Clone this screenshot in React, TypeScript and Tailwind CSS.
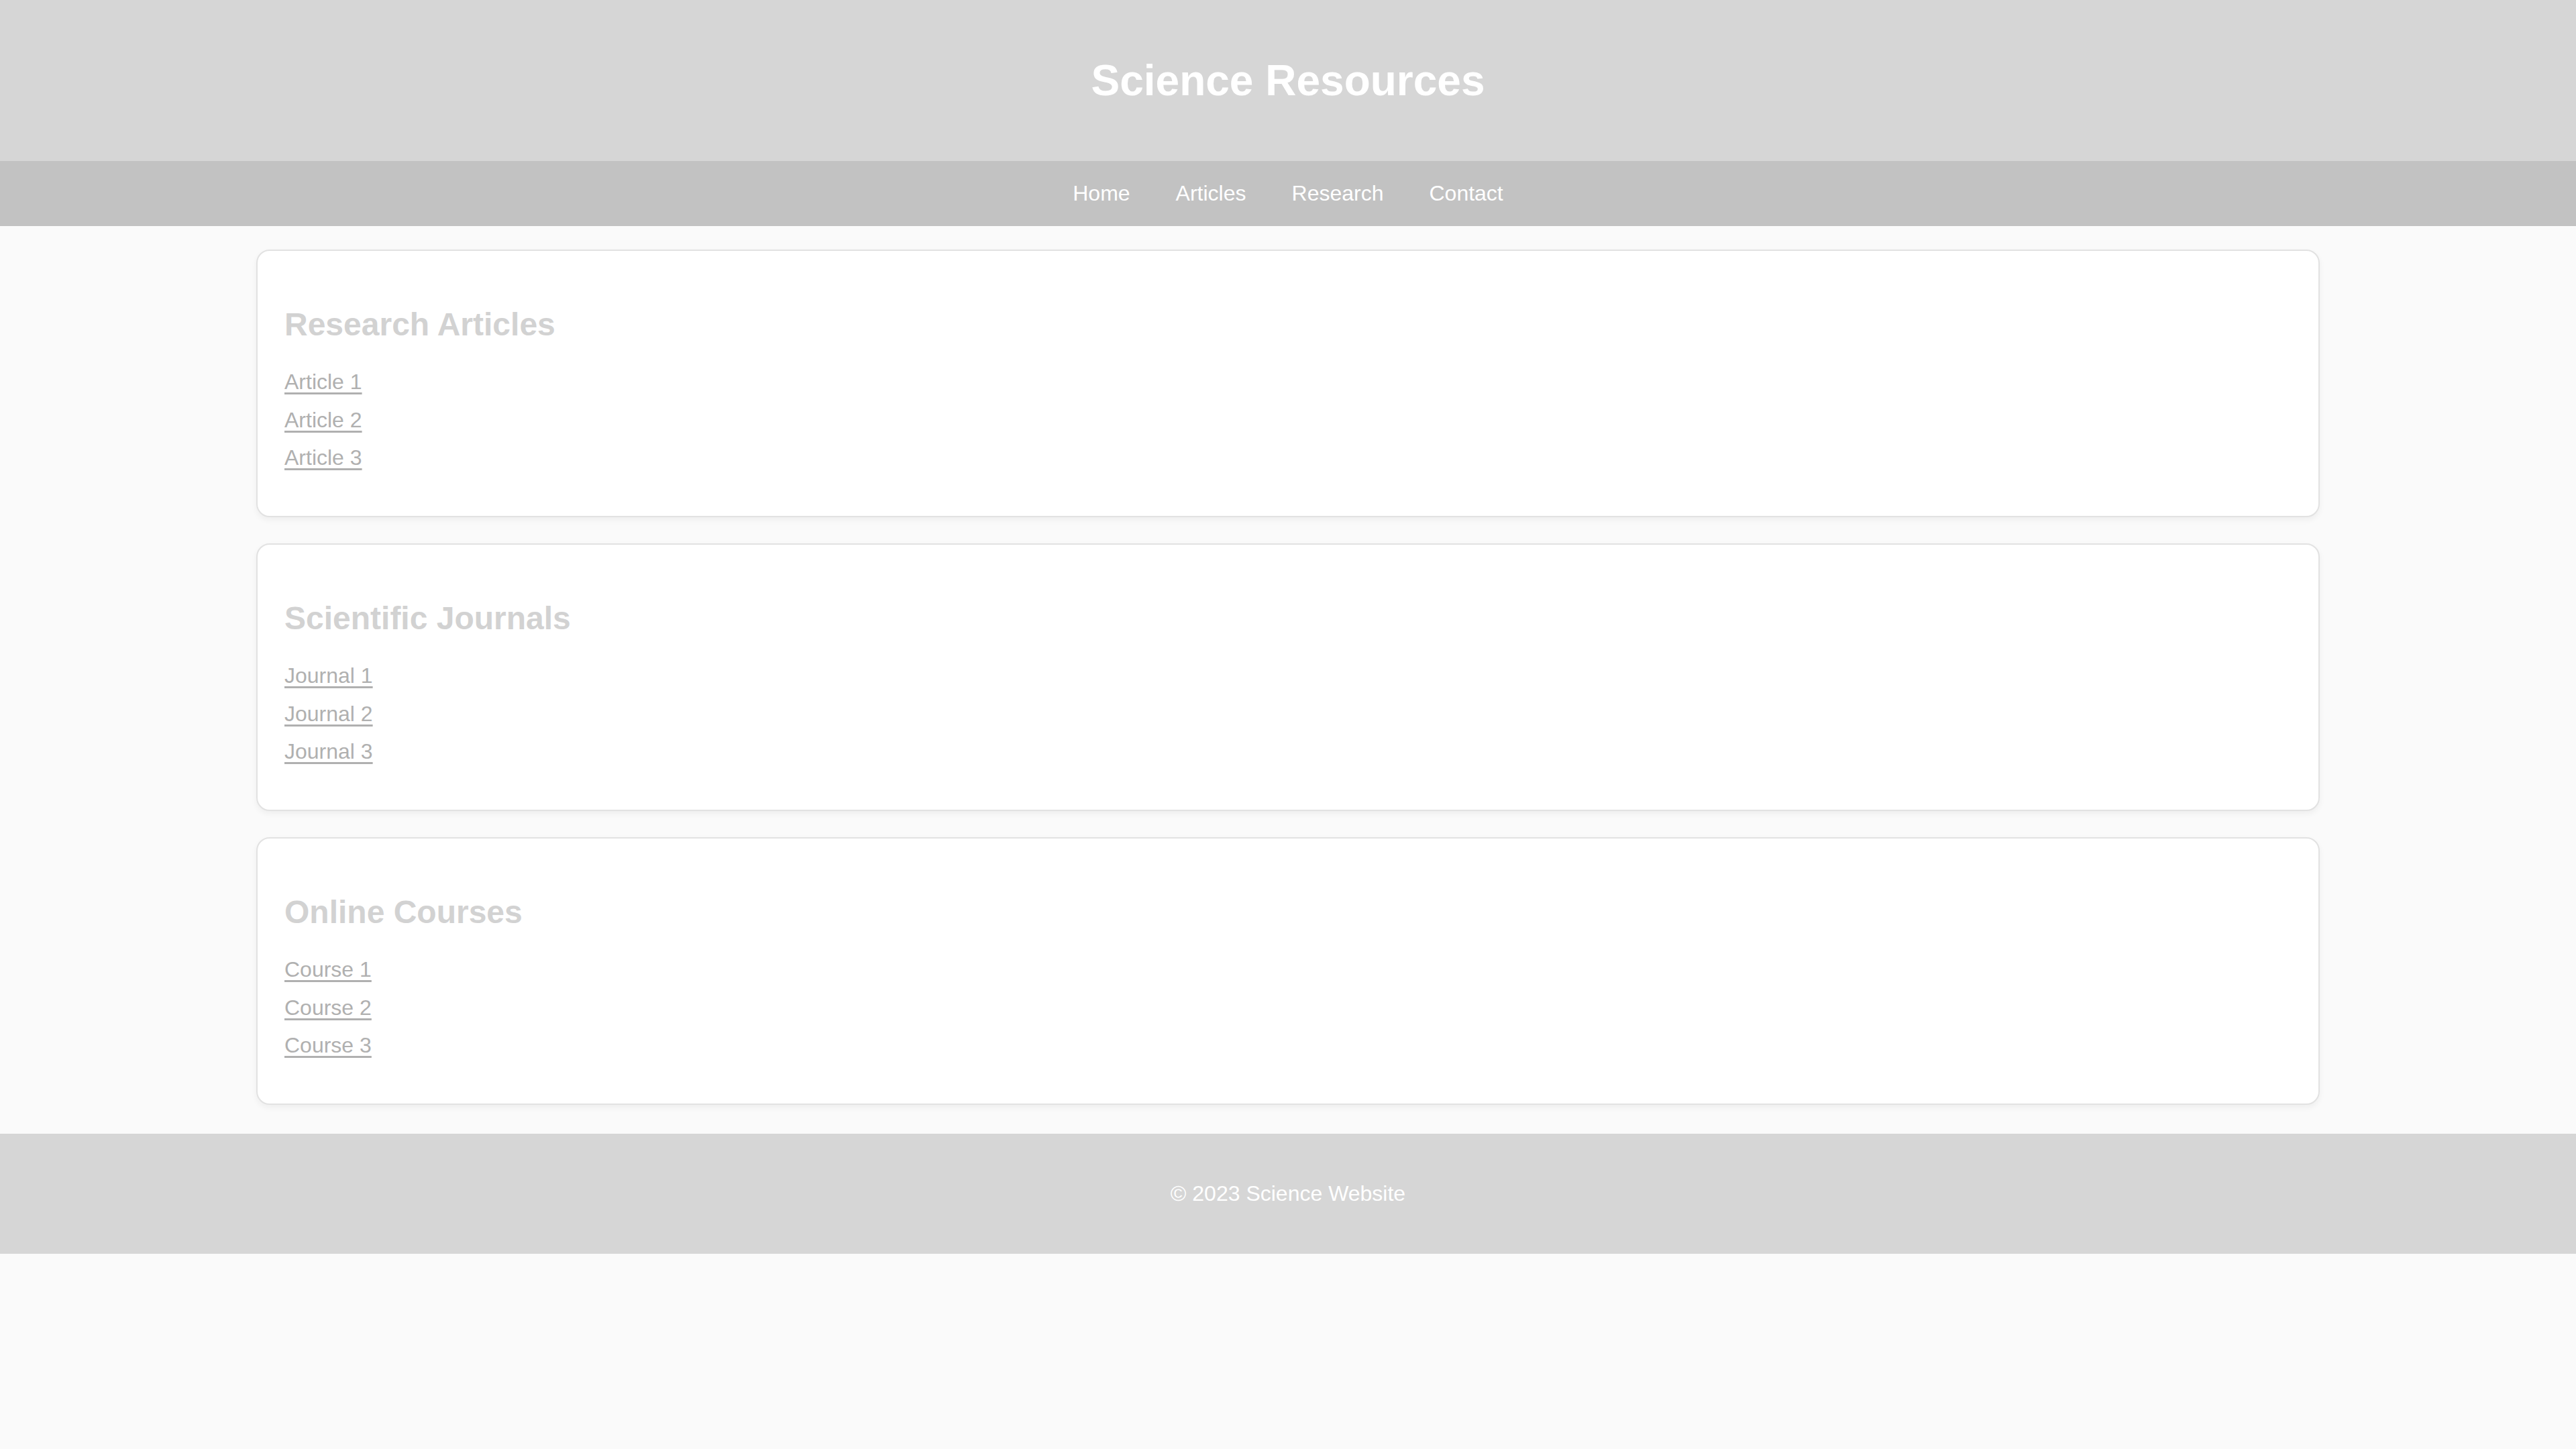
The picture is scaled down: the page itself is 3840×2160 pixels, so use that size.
import React from "react";

const sections = [
  { title: "Research Articles", items: ["Article 1", "Article 2", "Article 3"] },
  { title: "Scientific Journals", items: ["Journal 1", "Journal 2", "Journal 3"] },
  { title: "Online Courses", items: ["Course 1", "Course 2", "Course 3"] },
];

const navLinks = ["Home", "Articles", "Research", "Contact"];

export default function App() {
  return (
    <div className="min-h-screen bg-[#fafafa] font-['Liberation_Sans',Arial,sans-serif]">
      <header className="bg-[#d6d6d6] py-[40px] text-center">
        <h1 className="my-[43px] text-[64px] font-bold leading-[74px] text-white">
          Science Resources
        </h1>
      </header>

      <nav className="flex h-[97px] items-center justify-center gap-[68px] bg-[#c2c2c2]">
        {navLinks.map((link) => (
          <a key={link} href="#" className="text-[32px] leading-[37px] text-white">
            {link}
          </a>
        ))}
      </nav>

      <main className="mx-auto flex w-[3076px] flex-col gap-[39px] pt-[35px] pb-[43px]">
        {sections.map((section) => (
          <section
            key={section.title}
            className="rounded-[20px] border-2 border-[#e2e2e2] bg-white px-[40px] pt-[42px] pb-[40px] shadow-[0_4px_10px_rgba(0,0,0,0.05)]"
          >
            <h2 className="mt-[40px] mb-[40px] text-[48px] font-bold leading-[55px] text-[#d2d2d2]">
              {section.title}
            </h2>
            <ul className="mb-[28px] flex flex-col gap-[19.5px]">
              {section.items.map((item) => (
                <li key={item}>
                  <a
                    href="#"
                    className="text-[32px] leading-[37px] text-[#b0b0b0] underline decoration-[3px] underline-offset-[5px]"
                  >
                    {item}
                  </a>
                </li>
              ))}
            </ul>
          </section>
        ))}
      </main>

      <footer className="bg-[#d6d6d6] py-[71px] text-center">
        <p className="text-[32px] leading-[37px] text-white">© 2023 Science Website</p>
      </footer>
    </div>
  );
}
